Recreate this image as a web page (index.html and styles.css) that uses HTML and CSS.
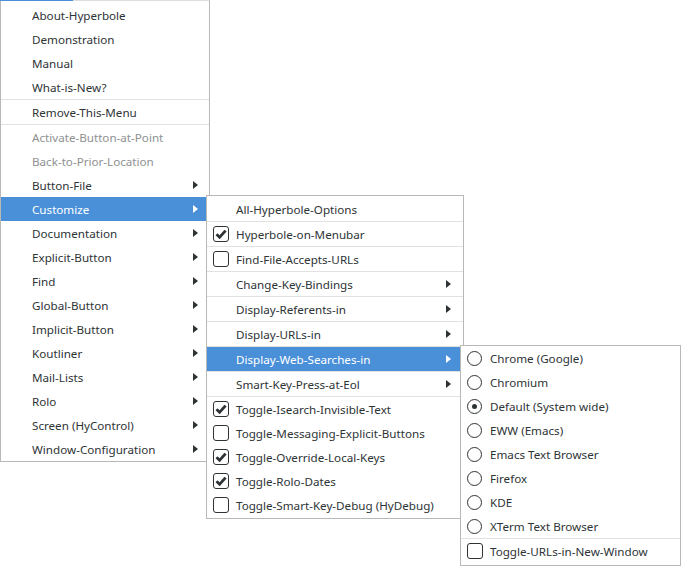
FILE: index.html
```html
<!DOCTYPE html>
<html>
<head>
<meta charset="utf-8">
<link rel="stylesheet" href="styles.css">
</head>
<body>
<div class="menu menu-main">
  <div class="item">About-Hyperbole</div>
  <div class="item">Demonstration</div>
  <div class="item">Manual</div>
  <div class="item">What-is-New?</div>
  <div class="item sep">Remove-This-Menu</div>
  <div class="item sep disabled">Activate-Button-at-Point</div>
  <div class="item disabled">Back-to-Prior-Location</div>
  <div class="item sub">Button-File<span class="arrow"></span></div>
  <div class="item sub active">Customize<span class="arrow"></span></div>
  <div class="item sub">Documentation<span class="arrow"></span></div>
  <div class="item sub">Explicit-Button<span class="arrow"></span></div>
  <div class="item sub">Find<span class="arrow"></span></div>
  <div class="item sub">Global-Button<span class="arrow"></span></div>
  <div class="item sub">Implicit-Button<span class="arrow"></span></div>
  <div class="item sub">Koutliner<span class="arrow"></span></div>
  <div class="item sub">Mail-Lists<span class="arrow"></span></div>
  <div class="item sub">Rolo<span class="arrow"></span></div>
  <div class="item sub">Screen (HyControl)<span class="arrow"></span></div>
  <div class="item sub">Window-Configuration<span class="arrow"></span></div>
</div>

<div class="menu menu-custom">
  <div class="item">All-Hyperbole-Options</div>
  <div class="item sep"><span class="check on"><svg viewBox="0 0 16 16"><path d="M3.5 8.2 L6.6 11.3 L12.6 4.6" /></svg></span>Hyperbole-on-Menubar</div>
  <div class="item sep"><span class="check"></span>Find-File-Accepts-URLs</div>
  <div class="item sep sub">Change-Key-Bindings<span class="arrow"></span></div>
  <div class="item sep sub">Display-Referents-in<span class="arrow"></span></div>
  <div class="item sep sub">Display-URLs-in<span class="arrow"></span></div>
  <div class="item sep sub active">Display-Web-Searches-in<span class="arrow"></span></div>
  <div class="item sep sub">Smart-Key-Press-at-Eol<span class="arrow"></span></div>
  <div class="item sep"><span class="check on"><svg viewBox="0 0 16 16"><path d="M3.5 8.2 L6.6 11.3 L12.6 4.6" /></svg></span>Toggle-Isearch-Invisible-Text</div>
  <div class="item"><span class="check"></span>Toggle-Messaging-Explicit-Buttons</div>
  <div class="item"><span class="check on"><svg viewBox="0 0 16 16"><path d="M3.5 8.2 L6.6 11.3 L12.6 4.6" /></svg></span>Toggle-Override-Local-Keys</div>
  <div class="item"><span class="check on"><svg viewBox="0 0 16 16"><path d="M3.5 8.2 L6.6 11.3 L12.6 4.6" /></svg></span>Toggle-Rolo-Dates</div>
  <div class="item"><span class="check"></span>Toggle-Smart-Key-Debug (HyDebug)</div>
</div>

<div class="menu menu-web">
  <div class="item"><span class="radio"></span>Chrome (Google)</div>
  <div class="item"><span class="radio"></span>Chromium</div>
  <div class="item"><span class="radio on"></span>Default (System wide)</div>
  <div class="item"><span class="radio"></span>EWW (Emacs)</div>
  <div class="item"><span class="radio"></span>Emacs Text Browser</div>
  <div class="item"><span class="radio"></span>Firefox</div>
  <div class="item"><span class="radio"></span>KDE</div>
  <div class="item"><span class="radio"></span>XTerm Text Browser</div>
  <div class="item sep"><span class="check"></span>Toggle-URLs-in-New-Window</div>
</div>
</body>
</html>
```

FILE: styles.css
```css
html, body {
  margin: 0;
  padding: 0;
  background: #ffffff;
}

body {
  width: 681px;
  height: 567px;
  position: relative;
  overflow: hidden;
  font-family: "Noto Sans", "DejaVu Sans", sans-serif;
  font-size: 11.65px;
  color: #2e3436;
}

.menu {
  background: #ffffff;
  border: 1px solid #b8b8b6;
  box-sizing: border-box;
}

.menu-main {
  position: relative;
  width: 210px;
  height: 462px;
  border-top-color: #dedede;
  padding-top: 2px;
}

.menu-main::before {
  content: "";
  position: absolute;
  left: -1px;
  top: -1px;
  width: 73px;
  height: 1px;
  background: #4a90d9;
}

.menu-custom {
  position: absolute;
  left: 206px;
  top: 195px;
  width: 258px;
  height: 324px;
  padding-top: 1px;
}

.menu-web {
  position: absolute;
  left: 460px;
  top: 345px;
  width: 221px;
  height: 221px;
}

.item {
  height: 23px;
  padding-top: 1px;
  line-height: 23px;
  display: flex;
  align-items: center;
  padding-left: 31px;
  position: relative;
  white-space: nowrap;
}

.menu-custom .item,
.menu-web .item {
  padding-left: 29px;
}

.item.sep {
  border-top: 1px solid #e2e2e2;
}

.item.disabled {
  color: #8e9192;
}

.item.active {
  background: #4a90d9;
  color: #ffffff;
}

.arrow {
  position: absolute;
  right: 11px;
  top: 8px;
  width: 0;
  height: 0;
  border-left: 5px solid #2e3436;
  border-top: 4px solid transparent;
  border-bottom: 4px solid transparent;
}

.menu-custom .arrow {
  right: 12px;
}

.item.active .arrow {
  border-left-color: #ffffff;
}

.check {
  position: absolute;
  left: 6px;
  top: 4px;
  width: 16px;
  height: 16px;
  box-sizing: border-box;
  border: 1px solid #2e3436;
  border-radius: 3px;
  background: #ffffff;
}

.check svg {
  position: absolute;
  left: -1px;
  top: -1px;
  width: 16px;
  height: 16px;
  fill: none;
  stroke: #2e3436;
  stroke-width: 2.8;
  stroke-linecap: butt;
  stroke-linejoin: miter;
}

.radio {
  position: absolute;
  left: 6px;
  top: 5px;
  width: 15px;
  height: 15px;
  box-sizing: border-box;
  border: 1px solid #2e3436;
  border-radius: 50%;
  background: #ffffff;
}

.radio.on::after {
  content: "";
  position: absolute;
  left: 4px;
  top: 4px;
  width: 5px;
  height: 5px;
  border-radius: 50%;
  background: #2e3436;
}
```
